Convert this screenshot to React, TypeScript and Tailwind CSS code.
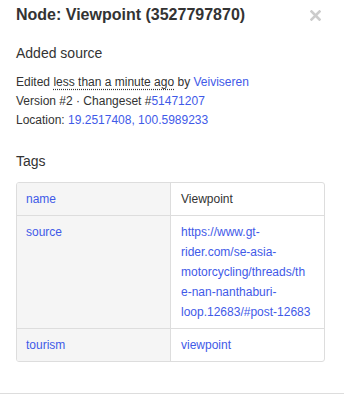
import React from 'react';

const LINK = 'text-[#3f5ae8]';

const tags = [
  { k: 'name', v: 'Viewpoint', link: false },
  {
    k: 'source',
    v: 'https://www.gt-rider.com/se-asia-motorcycling/threads/the-nan-nanthaburi-loop.12683/#post-12683',
    link: true,
  },
  { k: 'tourism', v: 'viewpoint', link: true },
];

function CloseIcon() {
  return (
    <svg width="11" height="11" viewBox="0 0 11 11" className="text-[#cccccc]">
      <path d="M1.5 1.5 L9.5 9.5 M9.5 1.5 L1.5 9.5" stroke="currentColor" strokeWidth="2.6" strokeLinecap="square" />
    </svg>
  );
}

export default function App() {
  return (
    <div
      className="w-[344px] h-[399px] bg-white text-[#333333] overflow-hidden"
      style={{ fontFamily: '"Liberation Sans", Arial, sans-serif' }}
    >
      <div className="border-b border-[#dddddd] pl-4 pr-[19px] pb-[31px]">
        {/* header */}
        <div className="flex h-[30px] items-center justify-between">
          <h2 className="text-[16px] font-bold leading-[20px]">Node: Viewpoint (3527797870)</h2>
          <button className="mr-[4px] flex items-center">
            <CloseIcon />
          </button>
        </div>

        {/* changeset comment */}
        <h3 className="mt-[13px] text-[14px] leading-[20px]">Added source</h3>

        <div className="mt-[10px] text-[12px] leading-[19px]">
          <p>
            Edited{' '}
            <span className="underline decoration-dotted decoration-[#333333] underline-offset-[3px]">
              less than a minute ago
            </span>{' '}
            by <a className={LINK}>Veiviseren</a>
          </p>
          <p>
            Version #2 · Changeset #<a className={LINK}>51471207</a>
          </p>
          <p>
            Location: <a className={LINK}>19.2517408, 100.5989233</a>
          </p>
        </div>

        {/* tags */}
        <h3 className="mt-[21px] text-[14px] leading-[20px]">Tags</h3>

        <div className="mt-[11px] overflow-hidden rounded-[3px] border border-[#dddddd] text-[12px] leading-[20px]">
          {tags.map((t, i) => (
            <div
              key={t.k}
              className={`grid grid-cols-[153px_minmax(0,1fr)] ${i > 0 ? 'border-t border-[#dddddd]' : ''}`}
            >
              <div className={`bg-[#f5f5f5] px-[9px] py-[6px] ${LINK}`}>{t.k}</div>
              <div
                className={`min-w-0 border-l border-[#dddddd] pl-[10px] pr-[13.5px] py-[6px] break-words ${
                  t.link ? LINK : ''
                }`}
              >
                {t.v}
              </div>
            </div>
          ))}
        </div>
      </div>
    </div>
  );
}
